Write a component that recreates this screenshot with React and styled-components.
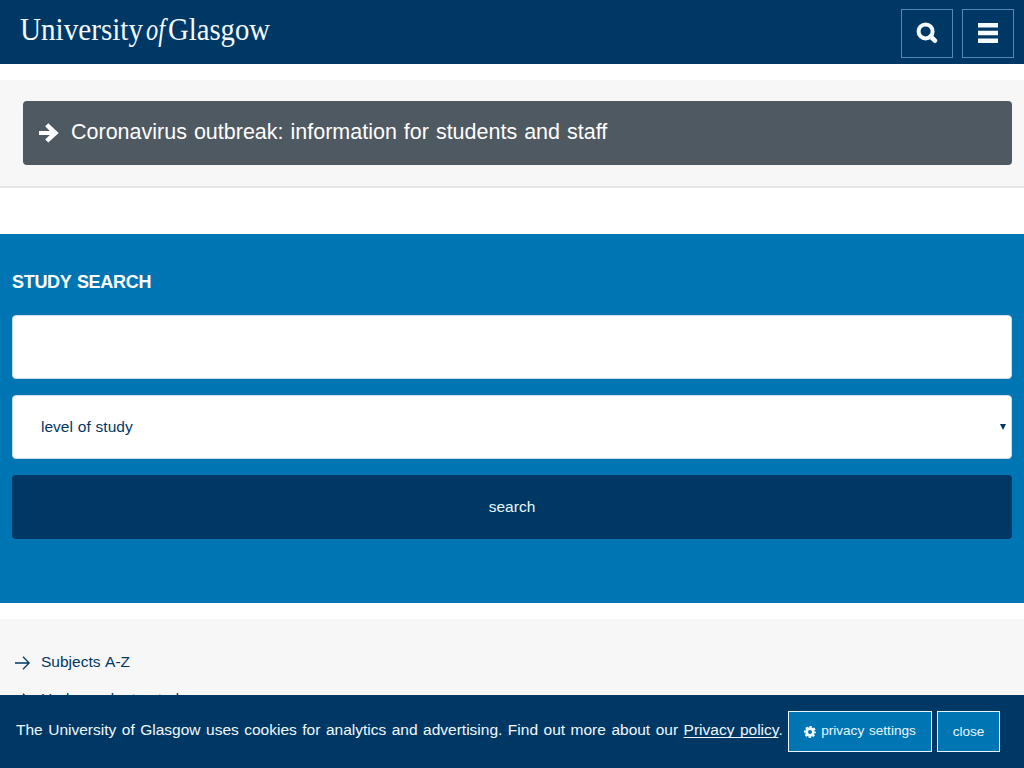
import React from "react";
import styled, { createGlobalStyle } from "styled-components";

const navy = "#003865";
const blue = "#0075b3";

const GlobalStyle = createGlobalStyle`
  * { box-sizing: border-box; }
  html, body { margin: 0; height: 100%; overflow: hidden; background: #fff; }
  body {
    font-family: "Liberation Sans", Arial, sans-serif;
    font-size: 15.5px;
    word-spacing: 1.2px;
    color: ${navy};
  }
  a { color: inherit; text-decoration: none; }
`;

const Header = styled.header`
  display: flex;
  align-items: center;
  justify-content: space-between;
  height: 64px;
  padding: 3px 10px 0 20px;
  background: ${navy};
`;
const Logo = styled.svg`
  display: block;
  width: 254px;
  height: 41px;
  overflow: visible;
  fill: #f4fbff;
  font-family: "Liberation Serif", "Times New Roman", serif;
  word-spacing: 0;
`;
const HeaderActions = styled.div`
  display: flex;
  gap: 9px;
`;
const IconButton = styled.button`
  display: flex;
  align-items: center;
  justify-content: center;
  width: 52px;
  height: 49px;
  padding: 0 0 1px;
  border: 1px solid #5389b5;
  background: transparent;
`;
const Notice = styled.section`
  margin-top: 16px;
  height: 108px;
  padding: 21px 12px 0 23px;
  background: #f7f7f7;
  border-bottom: 2px solid #e6e6e6;
`;
const NoticeLink = styled.a`
  display: flex;
  align-items: center;
  height: 64px;
  padding: 0 16px 0 15px;
  gap: 12px;
  border-radius: 4px;
  background: #4f5961;
`;
const NoticeText = styled.span`
  color: #fff;
  font-size: 21.5px;
  line-height: 24px;
  word-spacing: 1px;
  padding-bottom: 2px;
`;
const Study = styled.section`
  margin-top: 46px;
  height: 369px;
  padding: 36px 12px 0;
  background: ${blue};
`;
const StudyTitle = styled.h2`
  margin: 0 0 21px;
  color: #fff;
  font-size: 18px;
  line-height: 24px;
  letter-spacing: -0.3px;
  word-spacing: 1px;
  text-transform: uppercase;
`;
const Form = styled.form`
  display: grid;
  gap: 16px;
`;
const control = `
  width: 100%;
  height: 64px;
  border-radius: 4px;
  font: inherit;
  word-spacing: 0.6px;
`;
const TextField = styled.input`
  ${control}
  border: 1px solid #c9dbe8;
  background: #fff;
  padding: 0 28px;
`;
const SelectField = styled.button`
  ${control}
  display: flex;
  align-items: center;
  justify-content: space-between;
  border: 1px solid #c9dbe8;
  background: #fff;
  color: ${navy};
  padding: 0 5px 1px 28px;
`;
const SearchButton = styled.button`
  ${control}
  border: 0;
  padding: 0 0 1px;
  background: ${navy};
  color: #e8f7ff;
`;
const Links = styled.nav`
  display: flex;
  flex-direction: column;
  gap: 17px;
  margin-top: 16px;
  padding: 34px 15px;
  height: 149px;
  background: #f7f7f7;
`;
const LinkRow = styled.a`
  display: flex;
  align-items: center;
  gap: 11px;
  height: 20px;
  line-height: 20px;
`;
const CookieBar = styled.aside`
  position: fixed;
  left: 0;
  right: 0;
  bottom: 0;
  display: flex;
  align-items: flex-start;
  height: 73px;
  padding: 16px;
  background: ${navy};
  color: #f0f9ff;
`;
const CookieText = styled.p`
  margin: 0;
  width: 772px;
  line-height: 38px;
  white-space: nowrap;
`;
const PolicyLink = styled.a`
  text-decoration: underline;
  text-decoration-thickness: 1px;
  text-decoration-skip-ink: none;
  text-underline-offset: 2px;
`;
const CookieButton = styled.button`
  display: flex;
  align-items: center;
  justify-content: center;
  gap: 5px;
  width: ${(p) => p.$width}px;
  height: 41px;
  margin-right: 5px;
  padding: 0;
  border: 1px solid #e8f6fc;
  background: ${blue};
  color: #e9f8ff;
  font: 13.6px "Liberation Sans", Arial, sans-serif;
  word-spacing: 1px;
`;
const RaisedLabel = styled.span`
  padding-bottom: 2px;
`;

const ThinArrow = () => (
  <svg width="15" height="14" viewBox="0 0 15 14" fill="none" stroke={navy} strokeWidth="1.3">
    <path d="M0 7h14M8 .7 14.2 7 8 13.3" />
  </svg>
);

const links = ["Subjects A-Z", "Undergraduate study"];

export default function App() {
  return (
    <>
      <GlobalStyle />
      <Header>
        <Logo viewBox="0 0 254 41" role="img" aria-label="University of Glasgow">
          <text x="0" y="27" fontSize="30.5" textLength="123" lengthAdjust="spacingAndGlyphs">University</text>
          <text x="126" y="27" fontSize="32" fontStyle="italic" textLength="19" lengthAdjust="spacingAndGlyphs">of</text>
          <text x="148" y="27" fontSize="30.5" textLength="102" lengthAdjust="spacingAndGlyphs">Glasgow</text>
        </Logo>
        <HeaderActions>
          <IconButton aria-label="Search">
            <svg width="22" height="22" viewBox="0 0 22 22" fill="none" stroke="#f5fcff">
              <circle cx="9.6" cy="9.4" r="7" strokeWidth="4" />
              <path d="m14.7 14.5 4.2 4.2" strokeWidth="4.6" strokeLinecap="round" />
            </svg>
          </IconButton>
          <IconButton aria-label="Menu">
            <svg width="20" height="20" viewBox="0 0 20 20" fill="#f5fcff">
              <path d="M0 0h20v4.5H0zM0 7.7h20v4.6H0zM0 15.5h20V20H0z" />
            </svg>
          </IconButton>
        </HeaderActions>
      </Header>
      <Notice>
        <NoticeLink href="#">
          <svg width="21" height="20" viewBox="0 0 21 20" fill="#fff">
            <path d="M1 8h10.8L7.2 3.2 10.3.2l10.4 9.7-10.4 9.7-3.1-3 4.6-4.7H1z" />
          </svg>
          <NoticeText>Coronavirus outbreak: information for students and staff</NoticeText>
        </NoticeLink>
      </Notice>
      <Study>
        <StudyTitle>Study search</StudyTitle>
        <Form>
          <TextField aria-label="Search" />
          <SelectField type="button">
            level of study
            <svg width="6" height="6" viewBox="0 0 6 6" fill={navy}>
              <path d="M0 0h6L3 6z" />
            </svg>
          </SelectField>
          <SearchButton type="button">search</SearchButton>
        </Form>
      </Study>
      <Links>
        {links.map((label) => (
          <LinkRow href="#" key={label}>
            <ThinArrow />
            <RaisedLabel>{label}</RaisedLabel>
          </LinkRow>
        ))}
      </Links>
      <CookieBar>
        <CookieText>
          The University of Glasgow uses cookies for analytics and advertising. Find out more about our{" "}
          <PolicyLink href="#">Privacy policy</PolicyLink>.
        </CookieText>
        <CookieButton $width={144}>
          <svg width="12" height="12" viewBox="0 0 12 12" fill="none" stroke="#f0faff">
            <circle cx="6" cy="6" r="3.4" strokeWidth="2.8" />
            <circle cx="6" cy="6" r="5.2" strokeWidth="1.7" strokeDasharray="2.3 1.784" strokeDashoffset="1.15" />
          </svg>
          <RaisedLabel>privacy settings</RaisedLabel>
        </CookieButton>
        <CookieButton $width={63}>close</CookieButton>
      </CookieBar>
    </>
  );
}
